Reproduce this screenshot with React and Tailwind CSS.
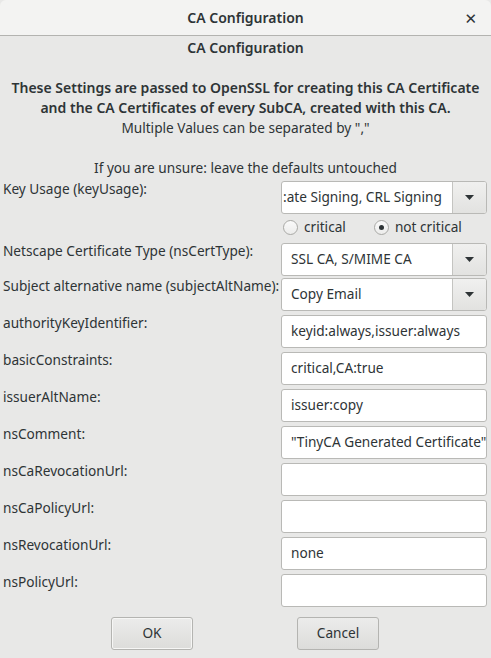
import React from 'react';

const rows = [
  { label: 'authorityKeyIdentifier:', value: 'keyid:always,issuer:always' },
  { label: 'basicConstraints:', value: 'critical,CA:true' },
  { label: 'issuerAltName:', value: 'issuer:copy' },
  { label: 'nsComment:', value: '"TinyCA Generated Certificate"' },
  { label: 'nsCaRevocationUrl:', value: '' },
  { label: 'nsCaPolicyUrl:', value: '' },
  { label: 'nsRevocationUrl:', value: 'none' },
  { label: 'nsPolicyUrl:', value: '' },
];

const Combo = ({ text, pad = 'pl-[9px]' }) => (
  <div className="flex h-[33px] w-[206px] overflow-hidden rounded-[3px] border border-[#b9b9b6] bg-white">
    <div className={`flex flex-1 items-center overflow-hidden whitespace-nowrap ${pad}`}>{text}</div>
    <div className="flex w-[34px] items-center justify-center border-l border-[#c4c4c1] bg-gradient-to-b from-[#f0f0ef] to-[#e2e2e0]">
      <svg width="9" height="5" viewBox="0 0 9 5">
        <path d="M0 0h9L4.5 5z" fill="#2e3436" />
      </svg>
    </div>
  </div>
);

const Entry = ({ value }) => (
  <div className="flex h-[33px] w-[206px] items-center overflow-hidden whitespace-nowrap rounded-[3px] border border-[#b9b9b6] bg-white pl-[9px]">
    {value}
  </div>
);

const Radio = ({ checked, label }) => (
  <div className="flex items-center gap-[6px]">
    <div className="flex h-[15px] w-[15px] items-center justify-center rounded-full border border-[#a9a9a6] bg-gradient-to-b from-[#fafafa] to-[#ececeb]">
      {checked && <div className="h-[5px] w-[5px] rounded-full bg-[#2e3436]" />}
    </div>
    <span>{label}</span>
  </div>
);

const Row = ({ label, children, mt = 'mt-[4px]' }) => (
  <div className={`flex ${mt}`}>
    <div className="w-[281px] whitespace-nowrap pl-[3px] leading-4">{label}</div>
    {children}
  </div>
);

export default function App() {
  return (
    <div
      className="h-[658px] w-[491px] overflow-hidden bg-[#e8e8e7] text-[13.65px] text-[#2e3436]"
      style={{ fontFamily: '"Noto Sans", "DejaVu Sans", sans-serif' }}
    >
      {/* title bar */}
      <div className="relative flex h-[36px] items-center justify-center rounded-t-[6px] border-b border-[#b3b3b0] bg-[#f3f3f2] text-[14px] font-semibold">
        CA Configuration
        <span className="absolute right-[14px] top-[10px] text-[15px] font-bold leading-4">✕</span>
      </div>

      <div className="text-center leading-5">
        <div className="mt-[2px] text-[14px] font-semibold">CA Configuration</div>
        <div className="h-5" />
        <div className="text-[14px] font-semibold">These Settings are passed to OpenSSL for creating this CA Certificate</div>
        <div className="text-[14px] font-semibold">and the CA Certificates of every SubCA, created with this CA.</div>
        <div>Multiple Values can be separated by ","</div>
        <div className="h-5" />
        <div>If you are unsure: leave the defaults untouched</div>
      </div>

      <Row label="Key Usage (keyUsage):" mt="mt-[3px]">
        <Combo text=":ate Signing, CRL Signing" pad="pl-[1px]" />
      </Row>
      <div className="ml-[283px] mt-[5px] flex h-[16px] items-center gap-[28px]">
        <Radio label="critical" />
        <Radio checked label="not critical" />
      </div>
      <Row label="Netscape Certificate Type (nsCertType):" mt="mt-[8px]">
        <Combo text="SSL CA, S/MIME CA" />
      </Row>
      <Row label="Subject alternative name (subjectAltName):" mt="mt-[2px]">
        <Combo text="Copy Email" />
      </Row>
      {rows.map((r) => (
        <Row key={r.label} label={r.label}>
          <Entry value={r.value} />
        </Row>
      ))}

      <div className="mt-[10px] flex">
        <button className="ml-[111px] h-[33px] w-[82px] rounded-[3px] border border-[#b4b4b1] bg-gradient-to-b from-[#ececeb] to-[#dcdcda] shadow-[inset_0_0_0_1px_#f6f6f5]">
          OK
        </button>
        <button className="ml-[104px] h-[33px] w-[82px] rounded-[3px] border border-[#b4b4b1] bg-gradient-to-b from-[#ececeb] to-[#dcdcda]">
          Cancel
        </button>
      </div>
    </div>
  );
}
